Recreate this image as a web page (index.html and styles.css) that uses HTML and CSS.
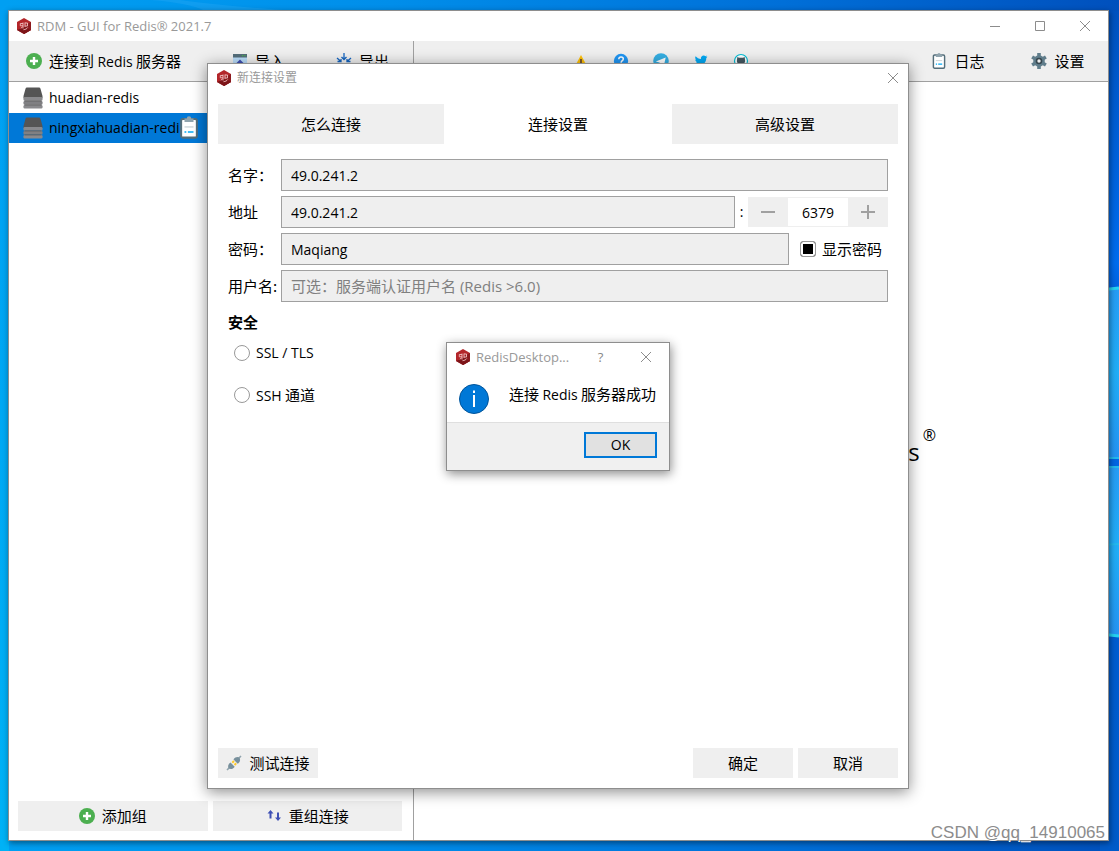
FILE: index.html
```html
<!DOCTYPE html>
<html lang="zh-CN">
<head>
<meta charset="utf-8">
<title>RDM - GUI for Redis</title>
<link rel="stylesheet" href="styles.css">
</head>
<body>
<svg class="defs" width="0" height="0" aria-hidden="true">
  <defs>
    <symbol id="logo" viewBox="0 0 16 16">
      <path d="M8 0 15 4V12L8 16 1 12V4Z" fill="#b3262a"/>
      <path d="M15 4V12L8 16V8Z" fill="#8b1a1e"/>
      <path d="M1 12 8 16 15 12 8 9Z" fill="#7d1519"/>
      <path d="M7 4.500v6M4.300 5.500h2.700M4.300 5.500v2.300h2.700M4.800 10.200 6.500 9M9 4.500v4.500M9 5h2.500v3H9M7.500 11.700C9.500 11.500 11 10.700 11.700 9.500" fill="none" stroke="#eebfc0" stroke-width=".9"/>
    </symbol>
    <symbol id="plus" viewBox="0 0 16 16">
      <circle cx="8" cy="8" r="8" fill="#4caf50"/>
      <path d="M8 4v8M4 8h8" stroke="#fff" stroke-width="2.400"/>
    </symbol>
    <symbol id="close" viewBox="0 0 12 12">
      <path d="M1 1 11 11M11 1 1 11" stroke="#8c8c8c" fill="none"/>
    </symbol>
    <symbol id="clip" viewBox="0 0 16 20">
      <rect x="1" y="2.500" width="14" height="16.500" rx="1.500" fill="#fff" stroke="#546e7a" stroke-width="1.800"/>
      <path d="M4 2h2a2 2 0 0 1 4 0h2v3H4z" fill="#90a4ae"/>
      <path d="M4 9.500h8" stroke="#cfd8dc" stroke-width="1.300"/>
      <path d="M4 14h1.600M7 14h5" stroke="#03a9f4" stroke-width="1.500"/>
    </symbol>
    <symbol id="server" viewBox="0 0 20 22">
      <path d="M4 .5h12q1.200 0 1.500 1.200L19.500 9v2H.5V9L2.500 1.700Q2.800 .5 4 .5z" fill="#555"/>
      <rect x=".5" y="10" width="19" height="3.700" rx="1.200" fill="#8a8a8d"/>
      <rect x=".5" y="14" width="19" height="3.700" rx="1.200" fill="#808083"/>
      <rect x=".5" y="18" width="19" height="3.500" rx="1.200" fill="#8a8a8d"/>
      <path d="M1.500 13.900h17M1.500 17.900h17" stroke="#555" stroke-width=".8"/>
    </symbol>
  </defs>
</svg>

<svg class="wallpaper" viewBox="0 0 1119 851" preserveAspectRatio="none" aria-hidden="true">
  <defs>
    <linearGradient id="sky" x1="0" x2="1"><stop offset="0" stop-color="#00a0f2"/><stop offset=".35" stop-color="#008eea"/><stop offset=".7" stop-color="#006fd8"/><stop offset="1" stop-color="#0050bd"/></linearGradient>
    <linearGradient id="edge" x1="0" y1="0" x2="0" y2="1"><stop offset="0" stop-color="#0052c0"/><stop offset=".3" stop-color="#006cee"/><stop offset=".34" stop-color="#005edc"/><stop offset="1" stop-color="#005bc9"/></linearGradient>
    <linearGradient id="left" x1="0" y1="0" x2="0" y2="1"><stop offset="0" stop-color="#009ff2"/><stop offset="1" stop-color="#00b2f6"/></linearGradient>
    <linearGradient id="pane" x1="0" y1="0" x2="0" y2="1"><stop offset="0" stop-color="#269cf5"/><stop offset=".5" stop-color="#20adf6"/><stop offset="1" stop-color="#2493f2"/></linearGradient>
  </defs>
  <rect width="1119" height="851" fill="url(#sky)"/>
  <rect width="9" height="851" fill="url(#left)"/>
  <path d="M150 0Q190 3 205 11H300Q220 6 180 0Z" fill="#2aa9f3" opacity=".35"/>
  <rect x="1100" y="11" width="19" height="840" fill="url(#edge)"/>
  <path d="M1100 290 1119 288V457H1100Z" fill="url(#pane)"/>
  <path d="M1100 467H1119V636L1100 634Z" fill="url(#pane)"/>
  <path d="M1100 290 1119 288M1100 634 1119 636" stroke="#24d2f2" stroke-width="3"/>
  <path d="M1100 458h19M1100 467h19M1100 545 1119 544" stroke="#22b8ee" stroke-width="2"/>
  <rect x="1100" y="459" width="19" height="7" fill="#0065e2"/>
</svg>

<main class="window app">
  <header class="titlebar">
    <svg class="i16"><use href="#logo"/></svg>
    <h1 class="title">RDM - GUI for Redis® 2021.7</h1>
    <div class="winctl">
      <button aria-label="Minimize"><svg class="i12" viewBox="0 0 12 12"><path d="M1 6.500h10" stroke="#8c8c8c"/></svg></button>
      <button aria-label="Maximize"><svg class="i12" viewBox="0 0 12 12"><path d="M1.500 1.500h9v9h-9z" fill="none" stroke="#8c8c8c"/></svg></button>
      <button aria-label="Close"><svg class="i12"><use href="#close"/></svg></button>
    </div>
  </header>

  <div class="panes">
    <section class="side">
      <nav class="bar bar-left">
        <button class="tool"><svg class="i16"><use href="#plus"/></svg><span>连接到 <span class="en">Redis</span> 服务器</span></button>
        <button class="tool"><svg class="i16" viewBox="0 0 16 16"><rect x="1" y="1" width="14" height="14" rx="1" fill="#bbdefb"/><path d="M1 1h14v3.500H1z" fill="#546e7a"/><path d="M10 2.700h1.200M12.300 2.700h1.200" stroke="#4caf50" stroke-width="1.200"/><path d="M8 6.500 11.500 10H9v4H7v-4H4.500z" fill="#3f51b5"/></svg><span>导入</span></button>
        <button class="tool"><svg class="i16" viewBox="0 0 16 16"><path d="M8 0v6M5.500 4 8 6.500 10.500 4M1 5l4 3.500M15 5l-4 3.500M1.500 8.500H5V6M14.500 8.500H11V6M8 16v-5M3 14l3-3M13 14l-3-3" fill="none" stroke="#1565c0" stroke-width="1.300"/></svg><span>导出</span></button>
      </nav>
      <ul class="tree">
        <li><svg class="server"><use href="#server"/></svg><span class="en">huadian-redis</span></li>
        <li class="on"><svg class="server"><use href="#server"/></svg><span class="en">ningxiahuadian-redi</span><svg class="badge"><use href="#clip"/></svg></li>
      </ul>
      <footer class="sidefoot">
        <button class="btn"><svg class="i16"><use href="#plus"/></svg><span>添加组</span></button>
        <button class="btn"><svg class="i16" viewBox="0 0 16 16"><path d="M4.500 10.500V4M12 4.500V11" fill="none" stroke="#3f51b5" stroke-width="2"/><path d="M1.500 5.500h6L4.500 2zM9 9.500h6L12 13z" fill="#3f51b5"/></svg><span>重组连接</span></button>
      </footer>
    </section>

    <section class="work">
      <nav class="bar">
        <div class="links">
          <a href="#warn" aria-label="Report issue"><svg class="i16" viewBox="0 0 16 16"><path d="M8 2 15 15H1z" fill="#ffc107"/><path d="M8 6v5M8 12.300v1.500" stroke="#5d4037" stroke-width="1.600"/></svg></a>
          <a href="#help" aria-label="Documentation"><svg class="i16" viewBox="0 0 16 16"><circle cx="8" cy="8" r="7.200" fill="#2196f3"/><path d="M5.800 6.200C5.800 3.200 10.300 3.400 10.300 6 10.300 7.700 8.100 7.600 8.100 9.700M8.100 11v1.500" fill="none" stroke="#fff" stroke-width="1.500"/></svg></a>
          <a href="#telegram" aria-label="Telegram"><svg class="i16" viewBox="0 0 16 16"><circle cx="8" cy="8" r="7.800" fill="#35aee2"/><path d="M2.800 8.500 12.700 4.500 11 12.300 8.300 10.300 7 11.700 6.600 9.500z" fill="#fff"/></svg></a>
          <a href="#twitter" aria-label="Twitter"><svg class="i16" viewBox="0 0 16 16"><path d="M14.500 3.800 13.300 5c.1 5-4.500 9.500-11.300 7.300 1.500 0 2.800-.4 3.700-1.200C4.400 11 3.500 10.200 3.200 9.200h1.100C3 8.700 2.200 7.700 2.200 6.500l1.100.3C2.100 5.800 1.900 4.300 2.600 3.200 4 4.900 5.800 5.800 8 5.900 7.500 3.600 9.200 2.400 10.600 2.400c.8 0 1.400.3 1.900.8l1.600-.6-1 1.400z" fill="#03a9f4"/></svg></a>
          <a href="#github" aria-label="GitHub"><svg class="i16" viewBox="0 0 16 16"><circle cx="8" cy="8" r="6.500" fill="#fff" stroke="#00bcd4" stroke-width="1.200"/><path d="M4.300 4 6 4.800h4L11.700 4 12 7c.5 3-1.500 4-2.500 4.200L10 14H6l.5-2.800C5.500 11 3.500 10 4 7z" fill="#455a64"/></svg></a>
        </div>
        <button class="tool wide"><svg class="i16"><use href="#clip"/></svg><span>日志</span></button>
        <button class="tool wide"><svg class="i16" viewBox="0 0 16 16"><path d="M8 0v16M1.100 4 14.900 12M1.100 12 14.900 4" stroke="#607d8b" stroke-width="3.600"/><circle cx="8" cy="8" r="5.800" fill="#607d8b"/><circle cx="8" cy="8" r="3.300" fill="#37474f"/><circle cx="8" cy="8" r="1.700" fill="#eee"/></svg><span>设置</span></button>
      </nav>
      <div class="welcome"><p>s<sup>®</sup></p></div>
    </section>
  </div>
</main>

<section class="window dialog" role="dialog" aria-label="新连接设置">
  <header class="titlebar">
    <svg class="i16"><use href="#logo"/></svg>
    <h2 class="title title-cn">新连接设置</h2>
    <button class="x" aria-label="Close"><svg class="i12"><use href="#close"/></svg></button>
  </header>
  <div class="tabs">
    <button>怎么连接</button>
    <button class="current">连接设置</button>
    <button>高级设置</button>
  </div>
  <form class="form">
    <label for="name">名字<span class="mid">：</span></label>
    <div class="row"><input id="name" class="field" value="49.0.241.2"></div>
    <label for="host">地址</label>
    <div class="row">
      <input id="host" class="field" value="49.0.241.2">
      <span class="colon en">:</span>
      <div class="spin">
        <button type="button" aria-label="-"><svg class="i16" viewBox="0 0 16 16"><path d="M1 8h14" stroke="#a0a0a0" stroke-width="2"/></svg></button>
        <input aria-label="Port" value="6379">
        <button type="button" aria-label="+"><svg class="i16" viewBox="0 0 16 16"><path d="M1 8h14M8 1v14" stroke="#a0a0a0" stroke-width="2"/></svg></button>
      </div>
    </div>
    <label for="pass">密码<span class="mid">：</span></label>
    <div class="row">
      <input id="pass" class="field" value="Maqiang">
      <label class="check"><input type="checkbox" checked>显示密码</label>
    </div>
    <label for="user">用户名:</label>
    <div class="row"><input id="user" class="field" placeholder="可选：服务端认证用户名 (Redis &gt;6.0)"></div>
    <div class="security">
      <h3>安全</h3>
      <label class="radio"><input type="radio" name="sec"><span class="en">SSL / TLS</span></label>
      <label class="radio"><input type="radio" name="sec"><span><span class="en">SSH</span> 通道</span></label>
    </div>
  </form>
  <footer class="dialogfoot">
    <button class="btn test"><svg class="i16" viewBox="0 0 16 16"><path d="M1 15 4 12M12 4l3-3" stroke="#90a4ae" stroke-width="1.600"/><path d="M6.300 7.700 8 6M8.500 10 10.200 8.300" stroke="#ffca28" stroke-width="2"/><path d="M4.500 7.500 8.700 11.700C7 14.500 4 14.500 2.700 13.300 1.500 12 2 9 4.500 7.500z" fill="#78909c"/><path d="M7.500 4.500 11.700 8.700C14.500 7 14.500 4 13.300 2.700 12 1.500 9 2 7.500 4.500z" fill="#78909c"/></svg><span>测试连接</span></button>
    <button class="btn">确定</button>
    <button class="btn">取消</button>
  </footer>
</section>

<section class="window message" role="alertdialog" aria-label="RedisDesktop">
  <header class="titlebar">
    <svg class="i16"><use href="#logo"/></svg>
    <h2 class="title">RedisDesktop...</h2>
    <button class="q" aria-label="Help">?</button>
    <button class="x" aria-label="Close"><svg class="i12"><use href="#close"/></svg></button>
  </header>
  <div class="msg">
    <svg class="info" viewBox="0 0 30 30"><circle cx="15" cy="15" r="14.500" fill="#0078d7" stroke="#00549a"/><path d="M15 11v12M15 6.500v2.500" stroke="#fff" stroke-width="2"/></svg>
    <p>连接 <span class="en">Redis</span> 服务器成功</p>
  </div>
  <footer class="msgfoot"><button class="ok">OK</button></footer>
</section>

<p class="mark">CSDN @qq_14910065</p>
</body>
</html>
```

FILE: styles.css
```css
* { box-sizing: border-box; }
body, h1, h2, h3, p, ul { margin: 0; padding: 0; }
body {
  position: relative;
  display: flex;
  min-height: 100vh;
  padding: 10px 10px 10px 8px;
  font: 15px/20px "Noto Sans CJK SC", sans-serif;
  color: #000;
  background: #0090ea;
  overflow: hidden;
}
button, input { font: inherit; color: inherit; }
button { display: flex; align-items: center; justify-content: center; padding: 0; border: 0; background: none; }
svg { flex: none; }
.en { font-family: "Open Sans", "Noto Sans CJK SC", sans-serif; font-size: 14px; }
.mid { font-family: "Noto Sans CJK TC", sans-serif; }
.i16 { width: 16px; height: 16px; }
.i12 { width: 12px; height: 12px; }
.defs { position: absolute; }
.wallpaper { position: absolute; inset: 0; width: 100%; height: 100%; }

.window { display: flex; flex-direction: column; background: #fff; border: 1px solid #8e8e8e; }
.titlebar { display: flex; align-items: center; height: 30px; padding-left: 8px; flex: none; }
.title { flex: 1; margin-left: 5px; font: 13px/16px "Open Sans", "Noto Sans CJK SC", sans-serif; color: #999; }
.title-cn { font-size: 12px; }
.x { width: 31px; height: 28px; }

.app { position: relative; flex: 1; box-shadow: 1px 2px 6px rgba(0, 0, 0, .45); }
.app > .titlebar { padding: 0 1px 0 7px; }
.winctl { display: flex; }
.winctl button { width: 45px; height: 28px; }
.panes { display: flex; flex: 1; }
.side { display: flex; flex-direction: column; width: 405px; border-right: 1px solid #a0a0a0; }
.work { display: flex; flex-direction: column; flex: 1; }
.bar { display: flex; align-items: center; height: 41px; background: #efefef; border-bottom: 1px solid #a0a0a0; }
.bar-left { justify-content: space-between; padding: 0 24px 0 17px; }
.tool { gap: 7px; }
.wide { width: 100px; height: 40px; }
.links { display: flex; flex: 1; justify-content: center; }
.links a { display: flex; justify-content: center; width: 40px; }
.tree { flex: 1; list-style: none; padding-top: 1px; }
.tree li { position: relative; display: flex; align-items: center; gap: 6px; height: 30px; padding-left: 14px; }
.tree .on { background: #0078d7; }
.server { width: 20px; height: 22px; }
.badge { position: absolute; left: 171px; top: 3px; width: 18px; height: 23px; }
.sidefoot { display: flex; gap: 5px; padding: 0 11px 9px 9px; }
.btn { gap: 7px; height: 30px; background: #efefef; }
.sidefoot .btn { flex: 1; }
.welcome { display: flex; flex: 1; align-items: center; justify-content: flex-end; padding: 0 172px 28px 0; }
.welcome p { font: 24px/32px "Open Sans", sans-serif; }
.welcome sup { font-size: 16px; line-height: 16px; margin-left: 3px; vertical-align: 20px; }

.dialog {
  position: absolute;
  inset: 63px 210px 62px 207px;
  box-shadow: 0 3px 14px rgba(0, 0, 0, .45);
}
.dialog > .titlebar { height: 28px; }
.tabs { display: grid; grid-template-columns: repeat(3, 1fr); gap: 1px; margin: 12px 10px 0; }
.tabs button { height: 40px; background: #efefef; }
.tabs .current { background: #fff; }
.form {
  display: grid;
  grid-template-columns: 48px 1fr;
  align-items: center;
  align-content: start;
  gap: 5px;
  flex: 1;
  padding: 15px 20px 0;
  white-space: nowrap;
}
.row { display: flex; align-items: center; }
.field {
  flex: 1;
  min-width: 0;
  height: 32px;
  padding: 0 9px;
  border: 1px solid #a0a0a0;
  background: #efefef;
  font: 14px/20px "Open Sans", "Noto Sans CJK SC", sans-serif;
}
.field::placeholder { color: #808080; opacity: 1; font-size: 15px; }
.colon { width: 13px; text-align: center; }
.spin { display: flex; width: 140px; height: 30px; background: #efefef; }
.spin button { width: 40px; }
.spin input { width: 60px; height: 28px; margin: 1px 0; padding: 0; border: 0; text-align: center; background: #fff; font: 14px/20px "Open Sans", sans-serif; }
.check { display: flex; align-items: center; gap: 6px; padding: 0 6px 0 11px; }
.check input { appearance: none; width: 16px; height: 16px; margin: 0; border: 1px solid #999; border-radius: 3px; background: #fff; }
.check input:checked { background: #000; box-shadow: inset 0 0 0 2px #fff; }
.security { grid-column: 1 / -1; padding-top: 5px; }
.security h3 { font-size: 15px; line-height: 20px; margin-bottom: 11px; }
.radio { display: flex; align-items: center; gap: 6px; height: 20px; padding-left: 6px; margin-bottom: 22px; }
.radio input { appearance: none; width: 16px; height: 16px; margin: 0; border: 1px solid #999; border-radius: 50%; background: #fff; }
.dialogfoot { display: flex; gap: 5px; padding: 0 10px 10px; }
.dialogfoot .btn { width: 100px; }
.dialogfoot .test { margin-right: auto; }

.message { position: absolute; left: 446px; top: 342px; width: 224px; box-shadow: 1px 3px 10px rgba(0, 0, 0, .45); }
.message > .titlebar { height: 28px; }
.q { width: 45px; height: 28px; font: 13px/16px "Open Sans", sans-serif; color: #888; }
.message .x { width: 46px; }
.msg { display: flex; gap: 20px; height: 51px; padding: 13px 0 0 12px; white-space: nowrap; }
.info { width: 30px; height: 30px; }
.msgfoot { display: flex; justify-content: flex-end; height: 48px; padding: 9px 12px; background: #f0f0f0; border-top: 1px solid #dfdfdf; }
.ok { width: 73px; height: 26px; border: 2px solid #0078d7; background: #e1e1e1; font: 14px/20px "Open Sans", sans-serif; }

.mark { position: absolute; right: 14px; bottom: 8px; font: 17px/20px "Liberation Sans", sans-serif; color: #8c8c8c; text-shadow: 1px 1px 0 #fff; }
```
